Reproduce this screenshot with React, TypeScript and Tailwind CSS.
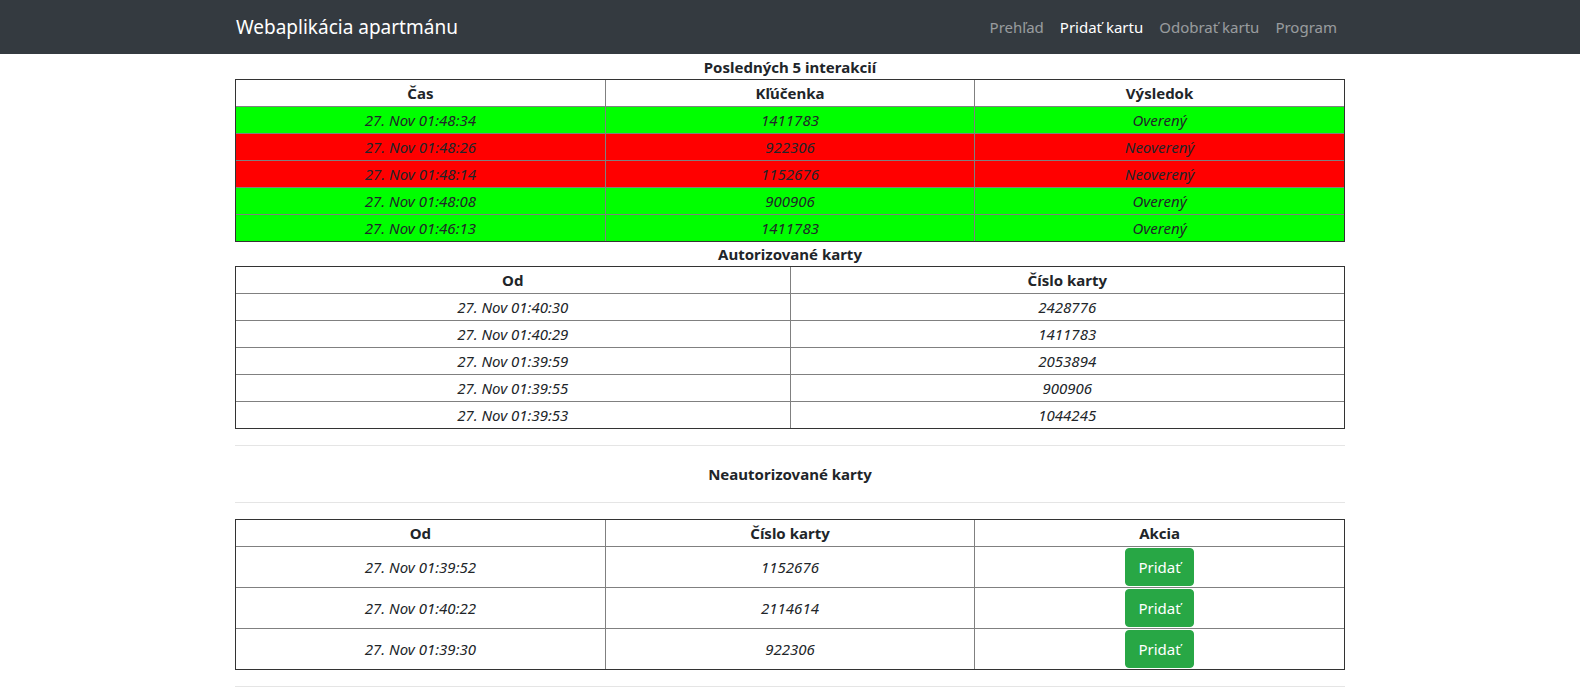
const recent = [
  { time: "27. Nov 01:48:34", card: "1411783", ok: true },
  { time: "27. Nov 01:48:26", card: "922306", ok: false },
  { time: "27. Nov 01:48:14", card: "1152676", ok: false },
  { time: "27. Nov 01:48:08", card: "900906", ok: true },
  { time: "27. Nov 01:46:13", card: "1411783", ok: true },
];

const authorized = [
  { from: "27. Nov 01:40:30", card: "2428776" },
  { from: "27. Nov 01:40:29", card: "1411783" },
  { from: "27. Nov 01:39:59", card: "2053894" },
  { from: "27. Nov 01:39:55", card: "900906" },
  { from: "27. Nov 01:39:53", card: "1044245" },
];

const unauthorized = [
  { from: "27. Nov 01:39:52", card: "1152676" },
  { from: "27. Nov 01:40:22", card: "2114614" },
  { from: "27. Nov 01:39:30", card: "922306" },
];

const th = "border-b border-r border-[#808080] last:border-r-0 p-px font-bold leading-6";
const td = "border-r border-[#808080] last:border-r-0 p-px italic leading-6";
const tr = "border-b border-[#808080] last:border-b-0";

function Title({ children }: { children: React.ReactNode }) {
  return <div className="text-center font-bold text-[15px] leading-6">{children}</div>;
}

export default function App() {
  return (
    <div className="min-h-screen bg-white text-[#212529] text-base" style={{ fontFamily: '"Noto Sans", "Open Sans", sans-serif' }}>
      <nav className="bg-[#343a40] h-[54px]">
        <div className="max-w-[1110px] mx-auto h-full flex items-center justify-between">
          <span className="text-white text-[19px] pl-px">Webaplikácia apartmánu</span>
          <div className="flex text-[15px]">
            <a className="px-2 text-white/50">Prehľad</a>
            <a className="px-2 text-white">Pridať kartu</a>
            <a className="px-2 text-white/50">Odobrať kartu</a>
            <a className="px-2 text-white/50">Program</a>
          </div>
        </div>
      </nav>

      <main className="max-w-[1110px] mx-auto text-[15px]">
        <div className="pt-px">
          <Title>Posledných 5 interakcií</Title>
        </div>
        <div className="border border-[#333]">
          <table className="w-full table-fixed border-collapse text-center">
            <thead>
              <tr>
                <th className={th}>Čas</th>
                <th className={th}>Kľúčenka</th>
                <th className={th}>Výsledok</th>
              </tr>
            </thead>
            <tbody>
              {recent.map((r, i) => (
                <tr key={i} className={`${tr} ${r.ok ? "bg-[#00ff00]" : "bg-[#ff0000]"}`}>
                  <td className={td}>{r.time}</td>
                  <td className={td}>{r.card}</td>
                  <td className={td}>{r.ok ? "Overený" : "Neoverený"}</td>
                </tr>
              ))}
            </tbody>
          </table>
        </div>

        <Title>Autorizované karty</Title>
        <div className="border border-[#333]">
          <table className="w-full table-fixed border-collapse text-center">
            <thead>
              <tr>
                <th className={th}>Od</th>
                <th className={th}>Číslo karty</th>
              </tr>
            </thead>
            <tbody>
              {authorized.map((r, i) => (
                <tr key={i} className={tr}>
                  <td className={td}>{r.from}</td>
                  <td className={td}>{r.card}</td>
                </tr>
              ))}
            </tbody>
          </table>
        </div>

        <hr className="my-4 border-t border-black/10" />
        <Title>Neautorizované karty</Title>
        <hr className="my-4 border-t border-black/10" />

        <div className="border border-[#333]">
          <table className="w-full table-fixed border-collapse text-center">
            <thead>
              <tr>
                <th className={th}>Od</th>
                <th className={th}>Číslo karty</th>
                <th className={th}>Akcia</th>
              </tr>
            </thead>
            <tbody>
              {unauthorized.map((r, i) => (
                <tr key={i} className={tr}>
                  <td className={td}>{r.from}</td>
                  <td className={td}>{r.card}</td>
                  <td className="p-px">
                    <button className="bg-[#28a745] text-white text-[15px] leading-6 px-3 py-[6px] border border-[#28a745] rounded">
                      Pridať
                    </button>
                  </td>
                </tr>
              ))}
            </tbody>
          </table>
        </div>
        <hr className="my-4 border-t border-black/10" />
      </main>
    </div>
  );
}
